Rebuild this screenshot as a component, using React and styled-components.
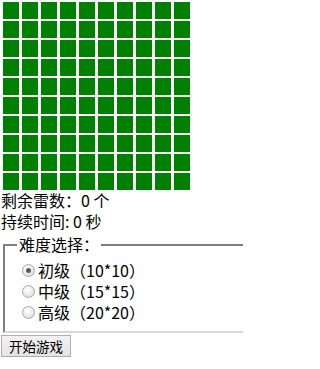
import React, { useState } from 'react'
import styled, { createGlobalStyle } from 'styled-components'

const SIZE = 10

const GlobalStyle = createGlobalStyle`
  html, body {
    margin: 0;
    padding: 0;
    overflow: hidden;
    background: #fff;
  }
  body {
    font-family: "Noto Sans CJK SC", "Noto Sans", sans-serif;
    font-size: 16px;
    color: #000;
  }
`

export default function App() {
  const [level, setLevel] = useState('easy')
  const levels = [
    { id: 'easy', label: '初级（10*10）' },
    { id: 'mid', label: '中级（15*15）' },
    { id: 'hard', label: '高级（20*20）' },
  ]

  return (
    <Page>
      <GlobalStyle />
      <Board>
        {Array.from({ length: SIZE * SIZE }, (_, i) => (
          <Cell key={i} />
        ))}
      </Board>
      <InfoLine>剩余雷数：0 个</InfoLine>
      <InfoLine>持续时间: 0 秒</InfoLine>
      <LevelBox>
        <Legend>难度选择：</Legend>
        {levels.map(l => (
          <RadioRow key={l.id}>
            <Radio
              type="radio"
              name="level"
              checked={level === l.id}
              onChange={() => setLevel(l.id)}
            />
            {l.label}
          </RadioRow>
        ))}
      </LevelBox>
      <StartButton>开始游戏</StartButton>
    </Page>
  )
}

const Page = styled.div`
  width: 242px;
  padding-left: 1px;
  overflow: hidden;
`

const Board = styled.div`
  display: grid;
  grid-template-columns: repeat(${SIZE}, 16px);
  grid-auto-rows: 17px;
  column-gap: 3px;
  row-gap: 2px;
  padding: 2px 0 0 2px;
`

const Cell = styled.div`
  background: #008000;
`

const InfoLine = styled.div`
  line-height: 21px;
  white-space: nowrap;
`

const LevelBox = styled.fieldset`
  width: 260px;
  margin: 2px 2px 0;
  padding: 5px 12px 8px;
  border-width: 2px;
  border-style: solid;
  border-color: #808080 #d8d8d8 #d8d8d8 #808080;
  box-shadow: inset 1px 1px 0 #fff;
  min-width: 0;
`

const Legend = styled.legend`
  padding: 0 2px;
  line-height: 21px;
`

const RadioRow = styled.label`
  display: flex;
  align-items: center;
  line-height: 21px;
  height: 21px;
  white-space: nowrap;
`

const Radio = styled.input`
  appearance: none;
  width: 13px;
  height: 13px;
  margin: 0 3px 0 5px;
  border: 1px solid #a8a8a8;
  border-radius: 50%;
  background: radial-gradient(circle at 40% 35%, #ffffff 0%, #e4e4e4 70%, #d4d4d4 100%);
  position: relative;
  flex: none;

  &:checked::after {
    content: '';
    position: absolute;
    left: 3px;
    top: 3px;
    width: 5px;
    height: 5px;
    border-radius: 50%;
    background: #5a5a5a;
  }
`

const StartButton = styled.button`
  display: block;
  margin-top: 2px;
  height: 22px;
  padding: 0 7px;
  font-family: "Noto Sans CJK SC", "Noto Sans", sans-serif;
  font-size: 13.5px;
  line-height: 20px;
  color: #000;
  border: 1px solid #adadad;
  border-radius: 0;
  background: linear-gradient(#f2f2f2, #e4e4e4);
`
